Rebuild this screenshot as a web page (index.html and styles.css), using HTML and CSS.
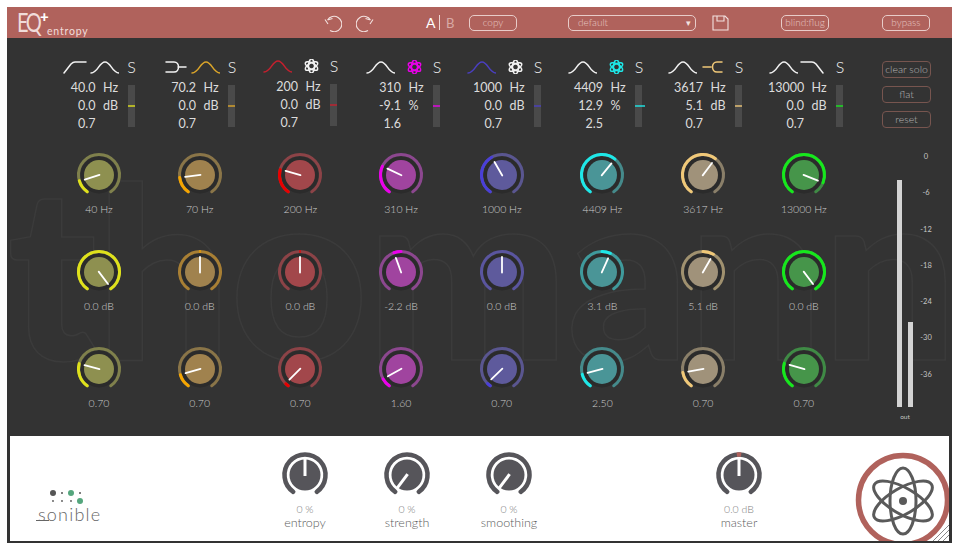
FILE: index.html
```html
<!DOCTYPE html>
<html lang="en">
<head>
<meta charset="utf-8">
<title>EQ+ entropy</title>
<link rel="stylesheet" href="styles.css">
</head>
<body>
<svg class="defs" width="0" height="0" aria-hidden="true">
  <defs>
    <path id="arc" pathLength="290" d="M-11.76 16.79A20.5 20.5 0 1 1 11.76 16.79"/>
    <g id="kb">
      <circle class="k-gap" r="18.5"/>
      <use href="#arc" class="k-track"/>
      <circle class="k-fill" r="15"/>
    </g>
    <line id="ptr" class="k-ptr" x1="0" y1="0.5" x2="0" y2="-15"/>
    <g id="bk">
      <use href="#arc" class="b-track"/>
      <circle class="b-fill" r="15.5"/>
    </g>
    <line id="bptr" class="b-ptr" x1="0" y1="1" x2="0" y2="-17"/>
    <path id="peak" class="crv" d="M2 13C9 13 10 2 16 2S23 13 30 13"/>
    <path id="lowcut" class="crv" d="M5 13L12 4Q14 2 16 2H27"/>
    <path id="highcut" class="crv" d="M3 2H14Q16 2 18 4L25 13"/>
    <path id="fork" class="crv" d="M6 2H14C20 2 20 12 14 12H6M18 7H26"/>
    <path id="forkr" class="crv" d="M6 7H14M25 2H20C14 2 14 12 20 12H25"/>
    <g id="atom" class="atm">
      <ellipse cx="19.5" cy="7" rx="7" ry="3" transform="rotate(30 19.5 7)"/>
      <ellipse cx="19.5" cy="7" rx="7" ry="3" transform="rotate(90 19.5 7)"/>
      <ellipse cx="19.5" cy="7" rx="7" ry="3" transform="rotate(150 19.5 7)"/>
    </g>
    <path id="undo" class="hd-ico" d="M3.5 6A7.7 7.7 0 1 1 6 16.5M1 5.5L4 10M3.5 6L8.5 4.5"/>
  </defs>
</svg>
<div class="window">
  <header class="topbar">
    <div class="logo"><span class="logo-eq">EQ</span><span class="logo-plus">+</span><span class="logo-name">entropy</span></div>
    <svg class="ico undo" viewBox="0 0 18 18"><use href="#undo"/></svg>
    <svg class="ico redo" viewBox="0 0 18 18"><use href="#undo" transform="translate(18 0) scale(-1 1)"/></svg>
    <div class="ab"><span class="ab-a">A</span><span class="ab-sep"></span><span class="ab-b">B</span></div>
    <div class="hbtn copy">copy</div>
    <div class="hbtn preset"><span>default</span><span class="caret">▾</span></div>
    <svg class="ico save" viewBox="0 0 17 16"><path class="hd-ico" d="M1 1H13L16 4V15H1ZM5 1V6H12V1"/></svg>
    <div class="hbtn blind">blind:flug</div>
    <div class="hbtn bypass">bypass</div>
  </header>

  <main class="main">
    <div class="left">
      <div class="strips">
        <section class="strip s1 c1">
          <div class="head"><svg class="slot" viewBox="0 0 30 14"><use href="#lowcut"/></svg><svg class="slot" viewBox="0 0 30 14"><use href="#peak"/></svg><span class="solo">S</span></div>
          <div class="vals"><span class="v">40.0</span><span class="u">Hz</span><div class="meter"><i class="mark"></i></div><span class="v">0.0</span><span class="u">dB</span><span class="v">0.7</span></div>
        </section>
        <section class="strip s2 c2">
          <div class="head"><svg class="slot" viewBox="0 0 30 14"><use href="#fork"/></svg><svg class="slot on" viewBox="0 0 30 14"><use href="#peak"/></svg><span class="solo">S</span></div>
          <div class="vals"><span class="v">70.2</span><span class="u">Hz</span><div class="meter"><i class="mark"></i></div><span class="v">0.0</span><span class="u">dB</span><span class="v">0.7</span></div>
        </section>
        <section class="strip s3 c3 up">
          <div class="head"><svg class="slot on" viewBox="0 0 30 14"><use href="#peak"/></svg><svg class="slot" viewBox="0 0 30 14"><use href="#atom"/></svg><span class="solo">S</span></div>
          <div class="vals"><span class="v">200</span><span class="u">Hz</span><div class="meter"><i class="mark"></i></div><span class="v">0.0</span><span class="u">dB</span><span class="v">0.7</span></div>
        </section>
        <section class="strip s4 c4">
          <div class="head"><svg class="slot" viewBox="0 0 30 14"><use href="#peak"/></svg><svg class="slot on" viewBox="0 0 30 14"><use href="#atom"/></svg><span class="solo">S</span></div>
          <div class="vals"><span class="v">310</span><span class="u">Hz</span><div class="meter"><i class="mark"></i></div><span class="v">-9.1</span><span class="u">%</span><span class="v">1.6</span></div>
        </section>
        <section class="strip s5 c5">
          <div class="head"><svg class="slot on" viewBox="0 0 30 14"><use href="#peak"/></svg><svg class="slot" viewBox="0 0 30 14"><use href="#atom"/></svg><span class="solo">S</span></div>
          <div class="vals"><span class="v">1000</span><span class="u">Hz</span><div class="meter"><i class="mark"></i></div><span class="v">0.0</span><span class="u">dB</span><span class="v">0.7</span></div>
        </section>
        <section class="strip s6 c6">
          <div class="head"><svg class="slot" viewBox="0 0 30 14"><use href="#peak"/></svg><svg class="slot on" viewBox="0 0 30 14"><use href="#atom"/></svg><span class="solo">S</span></div>
          <div class="vals"><span class="v">4409</span><span class="u">Hz</span><div class="meter"><i class="mark"></i></div><span class="v">12.9</span><span class="u">%</span><span class="v">2.5</span></div>
        </section>
        <section class="strip s7 c7">
          <div class="head"><svg class="slot" viewBox="0 0 30 14"><use href="#peak"/></svg><svg class="slot on" viewBox="0 0 30 14"><use href="#forkr"/></svg><span class="solo">S</span></div>
          <div class="vals"><span class="v">3617</span><span class="u">Hz</span><div class="meter"><i class="mark"></i></div><span class="v">5.1</span><span class="u">dB</span><span class="v">0.7</span></div>
        </section>
        <section class="strip s8 c8">
          <div class="head"><svg class="slot" viewBox="0 0 30 14"><use href="#peak"/></svg><svg class="slot" viewBox="0 0 30 14"><use href="#highcut"/></svg><span class="solo">S</span></div>
          <div class="vals"><span class="v">13000</span><span class="u">Hz</span><div class="meter"><i class="mark"></i></div><span class="v">0.0</span><span class="u">dB</span><span class="v">0.7</span></div>
        </section>
      </div>

      <div class="knobs">
        <div class="cell c1"><svg class="knob" viewBox="-24 -24 48 48"><use href="#kb"/><use href="#arc" class="k-act" stroke-dasharray="39 999"/><use href="#ptr" transform="rotate(-108)"/></svg><span class="lbl">40 Hz</span></div>
        <div class="cell c2"><svg class="knob" viewBox="-24 -24 48 48"><use href="#kb"/><use href="#arc" class="k-act" stroke-dasharray="48 999"/><use href="#ptr" transform="rotate(-97)"/></svg><span class="lbl">70 Hz</span></div>
        <div class="cell c3"><svg class="knob" viewBox="-24 -24 48 48"><use href="#kb"/><use href="#arc" class="k-act" stroke-dasharray="70 999"/><use href="#ptr" transform="rotate(-74)"/></svg><span class="lbl">200 Hz</span></div>
        <div class="cell c4"><svg class="knob" viewBox="-24 -24 48 48"><use href="#kb"/><use href="#arc" class="k-act" stroke-dasharray="80 999"/><use href="#ptr" transform="rotate(-65)"/></svg><span class="lbl">310 Hz</span></div>
        <div class="cell c5"><svg class="knob" viewBox="-24 -24 48 48"><use href="#kb"/><use href="#arc" class="k-act" stroke-dasharray="115 999"/><use href="#ptr" transform="rotate(-30)"/></svg><span class="lbl">1000 Hz</span></div>
        <div class="cell c6"><svg class="knob" viewBox="-24 -24 48 48"><use href="#kb"/><use href="#arc" class="k-act" stroke-dasharray="184 999"/><use href="#ptr" transform="rotate(39)"/></svg><span class="lbl">4409 Hz</span></div>
        <div class="cell c7"><svg class="knob" viewBox="-24 -24 48 48"><use href="#kb"/><use href="#arc" class="k-act" stroke-dasharray="182 999"/><use href="#ptr" transform="rotate(37)"/></svg><span class="lbl">3617 Hz</span></div>
        <div class="cell c8"><svg class="knob" viewBox="-24 -24 48 48"><use href="#kb"/><use href="#arc" class="k-act" stroke-dasharray="257 999"/><use href="#ptr" transform="rotate(112)"/></svg><span class="lbl">13000 Hz</span></div>

        <div class="cell c1 gain"><svg class="knob" viewBox="-24 -24 48 48"><use href="#kb"/><use href="#arc" class="k-act" stroke-dasharray="290 999"/><use href="#ptr" transform="rotate(143)"/></svg><span class="lbl">0.0 dB</span></div>
        <div class="cell c2 gain"><svg class="knob" viewBox="-24 -24 48 48"><use href="#kb"/><use href="#arc" class="k-tick" stroke-dasharray="3 999" stroke-dashoffset="-143.5"/><use href="#ptr"/></svg><span class="lbl">0.0 dB</span></div>
        <div class="cell c3 gain"><svg class="knob" viewBox="-24 -24 48 48"><use href="#kb"/><use href="#arc" class="k-tick" stroke-dasharray="3 999" stroke-dashoffset="-143.5"/><use href="#ptr"/></svg><span class="lbl">0.0 dB</span></div>
        <div class="cell c4 gain"><svg class="knob" viewBox="-24 -24 48 48"><use href="#kb"/><use href="#arc" class="k-act" stroke-dasharray="20 999" stroke-dashoffset="-125"/><use href="#ptr" transform="rotate(-20)"/></svg><span class="lbl">-2.2 dB</span></div>
        <div class="cell c5 gain"><svg class="knob" viewBox="-24 -24 48 48"><use href="#kb"/><use href="#ptr"/></svg><span class="lbl">0.0 dB</span></div>
        <div class="cell c6 gain"><svg class="knob" viewBox="-24 -24 48 48"><use href="#kb"/><use href="#arc" class="k-act" stroke-dasharray="24 999" stroke-dashoffset="-145"/><use href="#ptr" transform="rotate(24)"/></svg><span class="lbl">3.1 dB</span></div>
        <div class="cell c7 gain"><svg class="knob" viewBox="-24 -24 48 48"><use href="#kb"/><use href="#arc" class="k-act" stroke-dasharray="30 999" stroke-dashoffset="-145"/><use href="#ptr" transform="rotate(30)"/></svg><span class="lbl">5.1 dB</span></div>
        <div class="cell c8 gain"><svg class="knob" viewBox="-24 -24 48 48"><use href="#kb"/><use href="#arc" class="k-act" stroke-dasharray="290 999"/><use href="#ptr" transform="rotate(143)"/></svg><span class="lbl">0.0 dB</span></div>

        <div class="cell c1"><svg class="knob" viewBox="-24 -24 48 48"><use href="#kb"/><use href="#arc" class="k-act" stroke-dasharray="70 999"/><use href="#ptr" transform="rotate(-75)"/></svg><span class="lbl">0.70</span></div>
        <div class="cell c2"><svg class="knob" viewBox="-24 -24 48 48"><use href="#kb"/><use href="#arc" class="k-act" stroke-dasharray="39 999"/><use href="#ptr" transform="rotate(-106)"/></svg><span class="lbl">0.70</span></div>
        <div class="cell c3"><svg class="knob" viewBox="-24 -24 48 48"><use href="#kb"/><use href="#arc" class="k-act" stroke-dasharray="9 999"/><use href="#ptr" transform="rotate(-135)"/></svg><span class="lbl">0.70</span></div>
        <div class="cell c4"><svg class="knob" viewBox="-24 -24 48 48"><use href="#kb"/><use href="#arc" class="k-act" stroke-dasharray="26 999"/><use href="#ptr" transform="rotate(-119)"/></svg><span class="lbl">1.60</span></div>
        <div class="cell c5"><svg class="knob" viewBox="-24 -24 48 48"><use href="#kb"/><use href="#arc" class="k-act" stroke-dasharray="10 999"/><use href="#ptr" transform="rotate(-134)"/></svg><span class="lbl">0.70</span></div>
        <div class="cell c6"><svg class="knob" viewBox="-24 -24 48 48"><use href="#kb"/><use href="#arc" class="k-act" stroke-dasharray="40 999"/><use href="#ptr" transform="rotate(-105)"/></svg><span class="lbl">2.50</span></div>
        <div class="cell c7"><svg class="knob" viewBox="-24 -24 48 48"><use href="#kb"/><use href="#arc" class="k-act" stroke-dasharray="45 999"/><use href="#ptr" transform="rotate(-100)"/></svg><span class="lbl">0.70</span></div>
        <div class="cell c8"><svg class="knob" viewBox="-24 -24 48 48"><use href="#kb"/><use href="#arc" class="k-act" stroke-dasharray="71 999"/><use href="#ptr" transform="rotate(-74)"/></svg><span class="lbl">0.70</span></div>
      </div>
    </div>

    <aside class="side">
      <div class="sbtn">clear solo</div>
      <div class="sbtn">flat</div>
      <div class="sbtn">reset</div>
      <div class="level">
        <div class="bars-wrap">
          <div class="bars"><i class="bar bar-l"></i><i class="bar bar-r"></i></div>
          <span class="out">out</span>
        </div>
        <div class="scale"><span>0</span><span>-6</span><span>-12</span><span>-18</span><span>-24</span><span>-30</span><span>-36</span></div>
      </div>
    </aside>
  </main>

  <footer class="panel">
    <div class="brand">
      <svg class="dots" viewBox="0 0 50 20"><circle class="d-dark" cx="8" cy="5" r="3"/><circle class="d-dark" cx="17" cy="5" r="1"/><circle class="d-green" cx="26" cy="5" r="3"/><circle class="d-dark" cx="35" cy="5" r="1"/><circle class="d-dark" cx="8" cy="13" r="0.9"/><circle class="d-dark" cx="17" cy="13" r="0.9"/><circle class="d-dark" cx="26" cy="13" r="0.9"/><circle class="d-green" cx="35" cy="13" r="3"/></svg>
      <div class="brand-name">sonible</div>
    </div>
    <div class="bknob entropy"><svg class="knob" viewBox="-24 -24 48 48"><use href="#bk"/><use href="#bptr"/></svg><span class="bval">0 %</span><span class="bname">entropy</span></div>
    <div class="bknob strength"><svg class="knob" viewBox="-24 -24 48 48"><use href="#bk"/><use href="#bptr" transform="rotate(-143)"/></svg><span class="bval">0 %</span><span class="bname">strength</span></div>
    <div class="bknob smoothing"><svg class="knob" viewBox="-24 -24 48 48"><use href="#bk"/><use href="#bptr" transform="rotate(-143)"/></svg><span class="bval">0 %</span><span class="bname">smoothing</span></div>
    <div class="bknob master"><svg class="knob" viewBox="-24 -24 48 48"><use href="#bk"/><use href="#arc" class="b-tick" stroke-dasharray="12 999" stroke-dashoffset="-139"/><use href="#bptr"/></svg><span class="bval">0.0 dB</span><span class="bname">master</span></div>
    <svg class="atom-btn" viewBox="0 0 96 96">
      <circle class="ring" cx="48" cy="48" r="44.5"/>
      <ellipse class="orbit" cx="48" cy="49" rx="33" ry="13" transform="rotate(30 48 49)"/>
      <ellipse class="orbit" cx="48" cy="49" rx="33" ry="13" transform="rotate(90 48 49)"/>
      <ellipse class="orbit" cx="48" cy="49" rx="33" ry="13" transform="rotate(150 48 49)"/>
      <circle class="nucleus" cx="48" cy="49" r="4"/>
    </svg>
    <svg class="grip" viewBox="0 0 16 16"><path class="grip-line" d="M0 16L16 0M5 16L16 5M10 16L16 10"/></svg>
  </footer>
</div>
</body>
</html>
```
FILE: styles.css
```css
* { box-sizing: border-box; }
html, body { margin: 0; height: 100%; }
body { background: #fff; padding: 7px 0 0 7px; overflow: hidden; font-family: "Lato", "Liberation Sans", sans-serif; }
.defs { display: block; height: 0; }
.window { width: 945px; height: 536px; background: #333; display: flex; flex-direction: column; }

/* top bar */
.topbar { height: 31px; flex: none; background: #b0625c; display: flex; align-items: center; padding-left: 10px; }
.logo { width: 70px; height: 31px; position: relative; color: #f0dcda; }
.logo-eq { position: absolute; left: 0; top: -1px; font-size: 20px; font-weight: 400; line-height: 31px; letter-spacing: -2.5px; transform: scaleY(1.35); }
.logo-plus { position: absolute; left: 23px; top: 2px; font-size: 15px; font-weight: 900; color: #fff; line-height: 15px; }
.logo-name { font-size: 10.5px; letter-spacing: 0.8px; position: absolute; left: 30px; top: 17px; line-height: 14px; }
.ico { flex: none; }
.undo { width: 18px; height: 18px; margin-left: 237px; }
.redo { width: 18px; height: 18px; margin-left: 14px; }
.hd-ico { fill: none; stroke: #f3e2e0; stroke-width: 1.1; }
.ab { display: flex; align-items: center; margin-left: 52px; width: 43px; height: 18px; }
.ab-a { color: #fff; font-size: 14px; line-height: 18px; font-weight: 400; width: 10px; }
.ab-sep { width: 1px; height: 15px; background: #f0d8d6; margin: 0 6px 0 3px; }
.ab-b { color: #d8a9a5; font-size: 13px; line-height: 18px; }
.hbtn { height: 16px; border: 1.2px solid #e8ccc9; border-radius: 5px; color: #e6c6c2; font-size: 10px; font-weight: 300; line-height: 13px; text-align: center; flex: none; }
.copy { width: 48px; }
.preset { width: 128px; margin-left: 51px; display: flex; justify-content: space-between; padding: 0 4px 0 9px; }
.caret { color: #f3e2e0; font-size: 9px; }
.save { width: 17px; height: 16px; margin-left: 16px; }
.blind { width: 48px; margin-left: 52px; }
.bypass { width: 48px; margin-left: 53px; }

/* main */
.main { height: 398px; flex: none; display: flex; position: relative; overflow: hidden; isolation: isolate; }
.main::before { content: "thomann"; position: absolute; left: 0; top: 79px; z-index: -1; font-size: 240px; line-height: 300px; font-weight: 900; color: transparent; -webkit-text-stroke: 1.5px #3b3b3b; letter-spacing: -2px; white-space: nowrap; }
.left { width: 875px; flex: none; padding: 22px 0 0 41.65px; }

.c1 { --ac: #dfe11b; --tr: #7f804c; --fi: #8e9050; }
.c2 { --ac: #f5a500; --tr: #8a7548; --fi: #a0824e; }
.c3 { --ac: #e80000; --tr: #8c4347; --fi: #a2474b; }
.c4 { --ac: #ea00ea; --tr: #8c478f; --fi: #a0449f; }
.c5 { --ac: #4a3fd8; --tr: #5a5690; --fi: #5e5a9c; }
.c6 { --ac: #1ee8e8; --tr: #458a8b; --fi: #4a9597; }
.c7 { --ac: #f0c878; --tr: #8a7f69; --fi: #a0927a; }
.c8 { --ac: #16e81c; --tr: #3f8a45; --fi: #46954a; }
.c2.gain { --tr: #a87f34; }
.c5.gain { --tr: #5a559f; }
.c6.gain { --tr: #3f9a9c; }
.c7.gain { --tr: #a0916f; }
.s2 { --ac: #dba52a; }
.s3 { --ac: #c4202e; }
.s5 { --ac: #4a3fc0; }

/* strips */
.strips { display: grid; grid-template-columns: 100.5px 102px 103px 101px 101px 100px 101px 100px; height: 91px; margin-left: 10.85px; }
.strip { display: flex; flex-direction: column; }
.strip.up { margin-top: -1px; }
.head { display: flex; height: 14px; }
.slot { width: 30px; height: 14px; flex: none; }
.on { --cv: var(--ac); }
.crv { fill: none; stroke: var(--cv, #f2f2f2); stroke-width: 1.5; stroke-linecap: round; stroke-linejoin: round; }
.atm { fill: none; stroke: var(--cv, #f2f2f2); stroke-width: 1.5; }
.solo { width: 24px; text-align: center; font-size: 16px; font-weight: 300; line-height: 14px; color: #f4f4f4; }
.vals { display: grid; grid-template-columns: 36px 32.5px 7px; grid-auto-rows: 17.8px; margin-top: 5px; color: #dcdcdc; font-size: 12.5px; line-height: 17.8px; }
.v { grid-column: 1; text-align: right; }
.u { grid-column: 2; padding-left: 7.5px; }
.meter { grid-column: 3; grid-row: 1 / span 3; height: 42px; margin-top: 6px; background: #4a4a4a; display: flex; align-items: center; }
.mark { display: block; width: 100%; height: 2px; background: var(--ac); opacity: 0.7; }
.s6 .mark { width: 10px; flex: none; }

/* knobs */
.knobs { display: grid; grid-template-columns: repeat(8, 100.7px); grid-auto-rows: 65px; row-gap: 32px; }
.cell { display: flex; flex-direction: column; align-items: center; }
.knob { width: 48px; height: 48px; flex: none; display: block; overflow: visible; }
.lbl { margin-top: 3px; font-size: 10.5px; font-weight: 300; line-height: 14px; color: #cdcdcd; }
.k-gap { fill: #2b2b2b; }
.k-fill { fill: var(--fi); }
.k-track, .k-act, .k-tick, .b-track, .b-tick { fill: none; stroke-linecap: round; }
.k-track { stroke: var(--tr); stroke-width: 3; }
.k-act { stroke: var(--ac); stroke-width: 3; }
.k-tick { stroke: var(--ac); stroke-width: 3; stroke-linecap: butt; }
.k-ptr { stroke: #fff; stroke-width: 1.8; stroke-linecap: round; }

/* side */
.side { width: 60px; flex: none; padding-top: 23px; }
.sbtn { width: 49px; height: 17px; margin-bottom: 8px; border: 1px solid #77554f; border-radius: 4px; color: #b4b4b4; font-size: 10.5px; font-weight: 300; line-height: 15px; text-align: center; }
.level { display: flex; margin: 23px 0 0 15px; }
.bars-wrap { width: 16px; padding-top: 29px; display: flex; flex-direction: column; align-items: center; }
.bars { height: 227px; width: 16px; flex: none; display: flex; align-items: flex-end; justify-content: space-between; }
.bar { display: block; width: 5px; background: #d4d4d4; }
.bar-l { height: 227px; }
.bar-r { height: 85px; }
.out { font-size: 6.5px; line-height: 10px; color: #c4c4c4; margin-top: 5px; }
.scale { width: 16px; margin-left: 5px; display: flex; flex-direction: column; align-items: center; }
.scale span { height: 36.3px; font-size: 7.5px; line-height: 12px; color: #c4c4c4; }

/* bottom panel */
.panel { height: 105px; margin: 0 3px; flex: none; background: #fff; display: flex; align-items: flex-start; padding: 15px 0 0 26px; position: relative; overflow: hidden; }
.brand { width: 74px; flex: none; margin-top: 37px; }
.dots { display: block; width: 50px; height: 20px; margin-left: 9px; }
.d-dark { fill: #555; }
.d-green { fill: #55a67d; }
.brand-name { position: relative; font-size: 18px; font-weight: 300; color: #666; line-height: 20px; margin-top: -4px; letter-spacing: 1.2px; padding-left: 2px; }
.brand-name::before { content: ""; position: absolute; left: 0; bottom: 3px; width: 13px; height: 1px; background: #666; }
.bknob { width: 60px; flex: none; display: flex; flex-direction: column; align-items: center; }
.entropy { margin-left: 165px; }
.strength, .smoothing { margin-left: 42px; }
.master { margin-left: 170px; }
.b-track { stroke: #56555a; stroke-width: 4.5; }
.b-tick { stroke: #b0625c; stroke-width: 4.5; stroke-linecap: butt; }
.b-fill { fill: #56555a; }
.b-ptr { stroke: #fff; stroke-width: 3; }
.bval { margin-top: 3px; font-size: 10.5px; font-weight: 300; line-height: 14px; color: #808080; }
.bname { font-size: 12.5px; font-weight: 300; line-height: 14px; color: #5c5c5c; }
.atom-btn { position: absolute; left: 845px; top: 16px; width: 96px; height: 96px; }
.ring { fill: #fff; stroke: #b0625c; stroke-width: 5.5; }
.orbit { fill: none; stroke: #5a5a5a; stroke-width: 3; }
.nucleus { fill: #5a5a5a; }
.grip { position: absolute; right: 0; bottom: 0; width: 16px; height: 16px; }
.grip-line { fill: none; stroke: #888; stroke-width: 1; }
```
